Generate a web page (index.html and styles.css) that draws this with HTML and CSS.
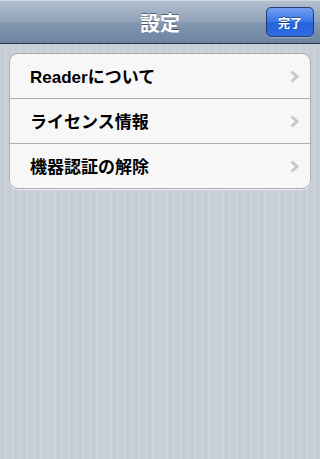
FILE: index.html
```html
<!DOCTYPE html>
<html lang="ja">
<head>
    <meta charset="UTF-8">
    <meta name="viewport" content="width=device-width, initial-scale=1.0">
    <title>設定</title>
    <link rel="stylesheet" href="styles.css">
</head>
<body>
    <div class="navbar">
        <h1 class="nav-title">設定</h1>
        <button class="done-btn">完了</button>
    </div>
    <div class="content">
        <ul class="group">
            <li class="cell">
                <span class="cell-label">Readerについて</span>
                <svg class="chevron" width="9" height="13" viewBox="0 0 9 13"><path d="M1.5 1.5 L7 6.5 L1.5 11.5" fill="none" stroke="#c8c8c8" stroke-width="3"/></svg>
            </li>
            <li class="cell">
                <span class="cell-label">ライセンス情報</span>
                <svg class="chevron" width="9" height="13" viewBox="0 0 9 13"><path d="M1.5 1.5 L7 6.5 L1.5 11.5" fill="none" stroke="#c8c8c8" stroke-width="3"/></svg>
            </li>
            <li class="cell">
                <span class="cell-label">機器認証の解除</span>
                <svg class="chevron" width="9" height="13" viewBox="0 0 9 13"><path d="M1.5 1.5 L7 6.5 L1.5 11.5" fill="none" stroke="#c8c8c8" stroke-width="3"/></svg>
            </li>
        </ul>
    </div>
</body>
</html>
```

FILE: styles.css
```css
body {
    margin: 0;
    width: 320px;
    height: 459px;
    overflow: hidden;
    font-family: "Liberation Sans", "Noto Sans CJK JP", sans-serif;
    background-color: #c9cfd9;
    background-image: repeating-linear-gradient(90deg, #c8ced8 0px, #c8ced8 5px, #ced4dd 5px, #ced4dd 7px);
}
.navbar {
    position: relative;
    height: 44px;
    display: flex;
    justify-content: center;
    align-items: center;
    background: linear-gradient(#b4c0cf 0%, #8fa1b8 50%, #8397b0 52%, #6e84a1 100%);
    border-top: 1px solid #cdd5df;
    border-bottom: 1px solid #2d3642;
    box-sizing: border-box;
}
.nav-title {
    margin: 0;
    font-size: 20px;
    font-weight: bold;
    color: #ffffff;
    text-shadow: 0 -1px 0 rgba(0, 0, 0, 0.45);
}
.done-btn {
    position: absolute;
    right: 6px;
    top: 6px;
    width: 48px;
    height: 30px;
    padding: 0;
    font-family: "Noto Sans CJK JP", sans-serif;
    font-size: 12px;
    font-weight: bold;
    color: #ffffff;
    text-shadow: 0 -1px 0 rgba(0, 0, 0, 0.4);
    background: linear-gradient(#6f9ef3 0%, #3a74e6 50%, #2563dd 52%, #2f6ae0 100%);
    border: 1px solid #253d70;
    border-radius: 5px;
    box-shadow: 0 1px 0 rgba(255, 255, 255, 0.3);
}
.content {
    padding: 9px 9px 0 9px;
}
.group {
    list-style: none;
    margin: 0;
    padding: 0;
    background-color: #f7f7f7;
    border: 1px solid #acacac;
    border-radius: 9px;
    box-shadow: 0 1px 0 rgba(255, 255, 255, 0.7);
}
.cell {
    height: 44px;
    display: flex;
    align-items: center;
    justify-content: space-between;
    padding: 0 11px 0 20px;
    border-bottom: 1px solid #acacac;
}
.cell:last-child {
    border-bottom: none;
}
.cell-label {
    font-size: 17px;
    font-weight: bold;
    color: #000000;
    margin-top: -2px;
}
.chevron {
    display: block;
}
```
